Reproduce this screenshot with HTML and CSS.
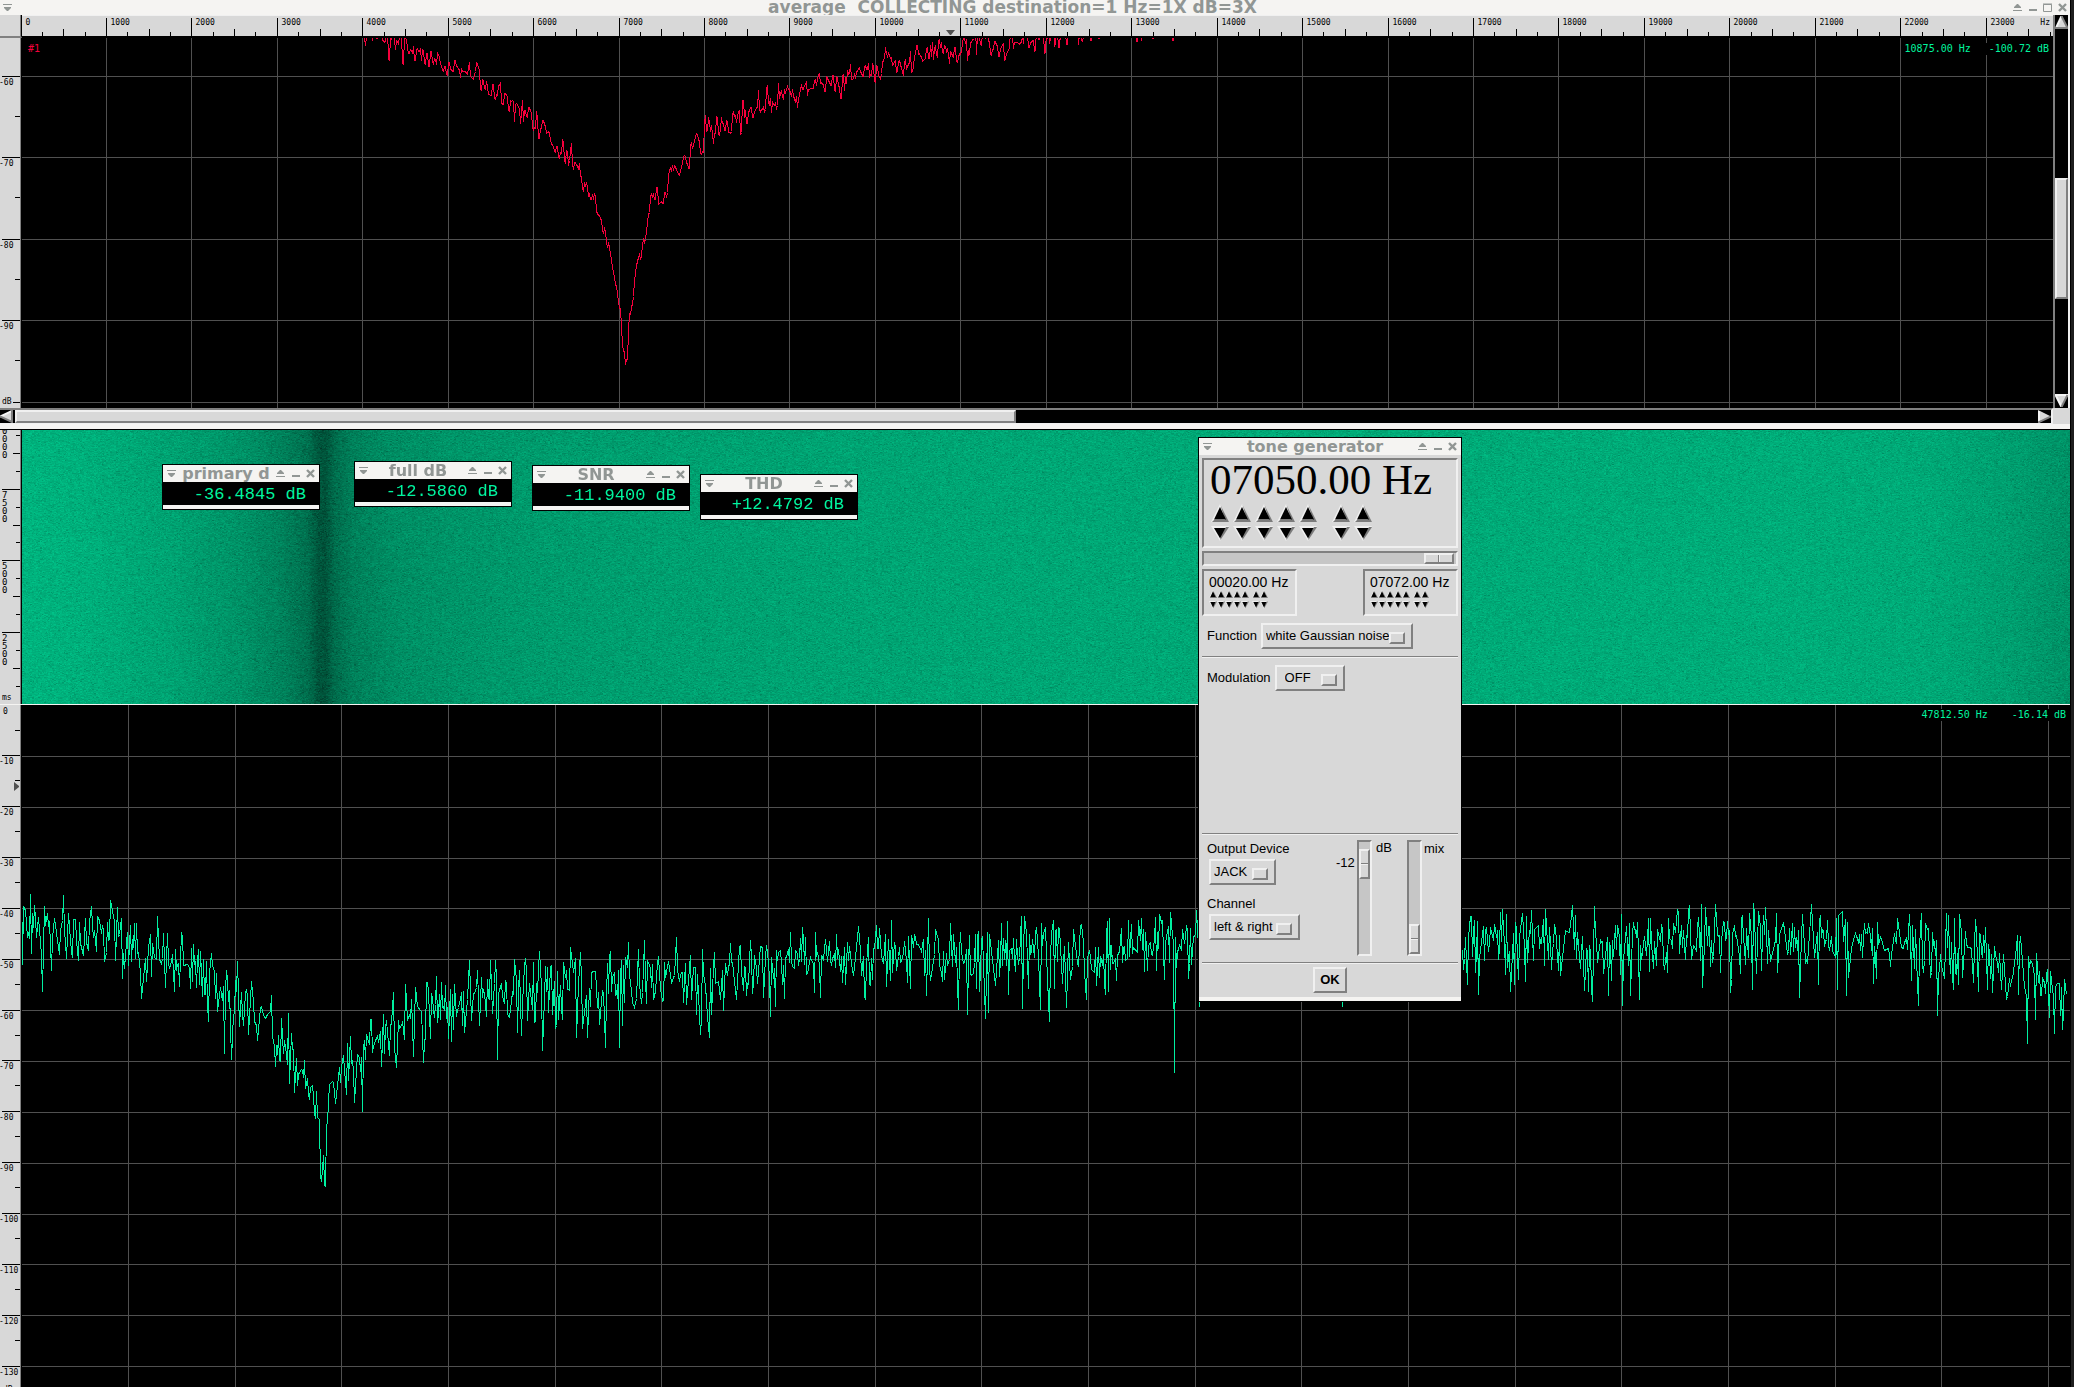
FILE: index.html
```html
<!DOCTYPE html>
<html lang="en">
<head>
<meta charset="utf-8">
<title>average COLLECTING</title>
<link rel="stylesheet" href="styles.css">
</head>
<body>
<svg class="defs" aria-hidden="true">
  <symbol id="i-menu" viewBox="0 0 9 7"><path d="M0 0h9v1H0zM1 3h7v1L5 7H4L1 4z" fill="#919694"/></symbol>
  <symbol id="i-shade" viewBox="0 0 9 7"><path d="M0 6h9v1H0zM1 4h7V3L5 0H4L1 3z" fill="#919694"/></symbol>
  <symbol id="i-min" viewBox="0 0 9 7"><path d="M1 5h8v2H1z" fill="#919694"/></symbol>
  <symbol id="i-max" viewBox="0 0 9 9"><path d="M.5 1.5h8v7h-8zM0 1h9" fill="none" stroke="#919694"/></symbol>
  <symbol id="i-close" viewBox="0 0 9 9"><path d="M1 1l7 7M8 1L1 8" fill="none" stroke="#919694" stroke-width="2.4"/></symbol>
  <symbol id="s-left" viewBox="0 0 13 13"><path d="M0 6.5L13 0v13z" fill="#d8d8d8"/><path d="M0 6.5L13 .5" stroke="#f4f4f4" stroke-width="2"/><path d="M0 6.5L12 12V0" fill="none" stroke="#808080" stroke-width="2"/></symbol>
  <symbol id="s-right" viewBox="0 0 13 13"><path d="M13 6.5L0 0v13z" fill="#d8d8d8"/><path d="M1 13V1" stroke="#f4f4f4" stroke-width="2"/><path d="M0 12.5L13 6.5" stroke="#808080" stroke-width="2"/></symbol>
  <symbol id="s-up" viewBox="0 0 13 13"><path d="M6.5 0L0 13h13z" fill="#d8d8d8"/><path d="M6.5 0L.5 13" stroke="#f4f4f4" stroke-width="2"/><path d="M6.5 0L12.5 12H0" fill="none" stroke="#808080" stroke-width="2"/></symbol>
  <symbol id="s-down" viewBox="0 0 13 13"><path d="M6.5 13L0 0h13z" fill="#d8d8d8"/><path d="M6.5 13L.5 1H13" fill="none" stroke="#f4f4f4" stroke-width="2"/><path d="M6.5 13L12.5 1" stroke="#808080" stroke-width="2"/></symbol>
  <symbol id="a-up" viewBox="0 0 18 18" preserveAspectRatio="none"><path d="M9 0L0 18h18z" fill="#f0f0f0"/><path d="M9.5 1L18 18H1l2-2h11z" fill="#7c7c7c"/><path d="M9 3L3 15.5h12z"/></symbol>
  <symbol id="a-down" viewBox="0 0 18 16" preserveAspectRatio="none"><path d="M9 16L0 0h18z" fill="#f0f0f0"/><path d="M9.5 15L18 1h-3L9 11z" fill="#7c7c7c"/><path d="M9 13L3 2h11.5z"/></symbol>
</svg>

<main class="desktop">
  <section class="spectrum">
    <header class="titlebar titlebar-main">
      <button class="tb" aria-label="Menu"><svg width="9" height="7"><use href="#i-menu"/></svg></button>
      <h1 class="title title-pre">average  COLLECTING destination=1 Hz=1X dB=3X</h1>
      <button class="tb" aria-label="Shade"><svg width="9" height="7"><use href="#i-shade"/></svg></button>
      <button class="tb" aria-label="Minimize"><svg width="9" height="7"><use href="#i-min"/></svg></button>
      <button class="tb" aria-label="Maximize"><svg width="9" height="9"><use href="#i-max"/></svg></button>
      <button class="tb" aria-label="Close"><svg width="9" height="9"><use href="#i-close"/></svg></button>
    </header>
    <div class="frame">
      <div class="corner"></div>
      <svg class="ruler-h" id="rulerHz"></svg>
      <div class="vscroll">
        <button class="sb" aria-label="Scroll up"><svg width="13" height="13"><use href="#s-up"/></svg></button>
        <div class="vtrack"><div class="gap-a"></div><div class="thumb vthumb"></div><div class="gap-b"></div></div>
        <button class="sb" aria-label="Scroll down"><svg width="13" height="13"><use href="#s-down"/></svg></button>
      </div>
      <svg class="ruler-v" id="rulerTop" height="370"></svg>
      <div class="plot">
        <svg class="chart" id="chartTop" viewBox="0 0 2031 370" preserveAspectRatio="none" height="370"></svg>
        <span class="trace-id">#1</span>
        <div class="readout"><span>10875.00 Hz</span><span>-100.72 dB</span></div>
      </div>
      <div class="hscroll">
        <button class="sb" aria-label="Scroll left"><svg width="13" height="13"><use href="#s-left"/></svg></button>
        <div class="htrack"><div class="thumb hthumb"></div></div>
        <button class="sb" aria-label="Scroll right"><svg width="13" height="13"><use href="#s-right"/></svg></button>
      </div>
      <div class="corner-end"></div>
    </div>
  </section>

  <section class="waterfall">
    <svg class="ruler-v" id="rulerMs" height="274"></svg>
    <canvas class="fall" id="fall" width="2048" height="274"></canvas>
  </section>

  <section class="live">
    <svg class="ruler-v" id="rulerDb" height="682"></svg>
    <div class="plot">
      <svg class="chart" id="chartLive" viewBox="0 0 2048 682" preserveAspectRatio="none" height="682"></svg>
      <div class="readout readout-live"><span>47812.50 Hz</span><span>-16.14 dB</span></div>
    </div>
  </section>

  <article class="win meter meter-primary">
    <header class="titlebar">
      <button class="tb" aria-label="Menu"><svg width="9" height="7"><use href="#i-menu"/></svg></button>
      <h2 class="title">primary d</h2>
      <button class="tb" aria-label="Shade"><svg width="9" height="7"><use href="#i-shade"/></svg></button>
      <button class="tb" aria-label="Minimize"><svg width="9" height="7"><use href="#i-min"/></svg></button>
      <button class="tb" aria-label="Close"><svg width="9" height="9"><use href="#i-close"/></svg></button>
    </header>
    <output class="value">-36.4845 dB</output>
  </article>
  <article class="win meter meter-full">
    <header class="titlebar">
      <button class="tb" aria-label="Menu"><svg width="9" height="7"><use href="#i-menu"/></svg></button>
      <h2 class="title">full dB</h2>
      <button class="tb" aria-label="Shade"><svg width="9" height="7"><use href="#i-shade"/></svg></button>
      <button class="tb" aria-label="Minimize"><svg width="9" height="7"><use href="#i-min"/></svg></button>
      <button class="tb" aria-label="Close"><svg width="9" height="9"><use href="#i-close"/></svg></button>
    </header>
    <output class="value">-12.5860 dB</output>
  </article>
  <article class="win meter meter-snr">
    <header class="titlebar">
      <button class="tb" aria-label="Menu"><svg width="9" height="7"><use href="#i-menu"/></svg></button>
      <h2 class="title">SNR</h2>
      <button class="tb" aria-label="Shade"><svg width="9" height="7"><use href="#i-shade"/></svg></button>
      <button class="tb" aria-label="Minimize"><svg width="9" height="7"><use href="#i-min"/></svg></button>
      <button class="tb" aria-label="Close"><svg width="9" height="9"><use href="#i-close"/></svg></button>
    </header>
    <output class="value">-11.9400 dB</output>
  </article>
  <article class="win meter meter-thd">
    <header class="titlebar">
      <button class="tb" aria-label="Menu"><svg width="9" height="7"><use href="#i-menu"/></svg></button>
      <h2 class="title">THD</h2>
      <button class="tb" aria-label="Shade"><svg width="9" height="7"><use href="#i-shade"/></svg></button>
      <button class="tb" aria-label="Minimize"><svg width="9" height="7"><use href="#i-min"/></svg></button>
      <button class="tb" aria-label="Close"><svg width="9" height="9"><use href="#i-close"/></svg></button>
    </header>
    <output class="value">+12.4792 dB</output>
  </article>

  <article class="win tone">
    <header class="titlebar">
      <button class="tb" aria-label="Menu"><svg width="9" height="7"><use href="#i-menu"/></svg></button>
      <h2 class="title">tone generator</h2>
      <button class="tb" aria-label="Shade"><svg width="9" height="7"><use href="#i-shade"/></svg></button>
      <button class="tb" aria-label="Minimize"><svg width="9" height="7"><use href="#i-min"/></svg></button>
      <button class="tb" aria-label="Close"><svg width="9" height="9"><use href="#i-close"/></svg></button>
    </header>
    <div class="tone-body">
      <div class="sunken freq">
        <output class="freq-value">07050.00 Hz</output>
        <div class="spins spins-big"></div>
      </div>
      <input class="range range-h" type="range" min="0" max="100" value="99" aria-label="Frequency">
      <div class="limits">
        <div class="sunken limit"><output>00020.00 Hz</output><div class="spins spins-small"></div></div>
        <div class="sunken limit"><output>07072.00 Hz</output><div class="spins spins-small"></div></div>
      </div>
      <div class="row row-function">
        <label for="fn">Function</label>
        <span class="option"><select id="fn" class="select select-fn"><option>white Gaussian noise</option></select></span>
      </div>
      <hr class="rule">
      <div class="row row-mod">
        <label for="mod">Modulation</label>
        <span class="option"><select id="mod" class="select select-mod"><option>OFF</option></select></span>
      </div>
      <hr class="rule">
      <div class="output">
        <div class="device">
          <label for="dev">Output Device</label>
          <span class="option"><select id="dev" class="select select-dev"><option>JACK</option></select></span>
          <label for="chan">Channel</label>
          <span class="option"><select id="chan" class="select select-chan"><option>left &amp; right</option></select></span>
        </div>
        <output class="gain">-12</output>
        <input class="range range-v" type="range" id="gain" min="0" max="100" value="92">
        <label class="lab-db" for="gain">dB</label>
        <input class="range range-v" type="range" id="mix" min="0" max="100" value="0">
        <label class="lab-mix" for="mix">mix</label>
      </div>
      <hr class="rule">
      <button class="ok">OK</button>
    </div>
  </article>
</main>
<script src="app.js"></script>
</body>
</html>
```
FILE: styles.css
```css
* { box-sizing: border-box; }
body {
  margin: 0;
  min-height: 100vh;
  display: flex;
  background: #1e1e1e;
  color: #000;
  font: 13px/16px "Liberation Sans", Arial, sans-serif;
}
h1, h2 { margin: 0; }
button, select, input { margin: 0; padding: 0; border: 0; background: none; font: inherit; color: inherit; }
svg { display: block; }
.defs { position: absolute; width: 0; height: 0; }

.desktop {
  position: relative;
  flex: 1;
  display: flex;
  flex-direction: column;
  height: 100vh;
  min-width: 0;
  margin-right: 3px;
  border-right: 1px solid #000;
  background: #000;
  overflow: hidden;
}

/* title bars */
.titlebar {
  display: flex;
  align-items: center;
  height: 17px;
  padding: 0 4px;
  gap: 6px;
  background: #f5f4f2;
  overflow: hidden;
}
.titlebar-main { height: 15px; padding: 0 3px; }
.tb { flex: none; width: 9px; height: 9px; display: grid; place-items: center; }
.title {
  flex: 1;
  min-width: 0;
  overflow: hidden;
  text-align: center;
  white-space: nowrap;
  font: bold 16px/18px "DejaVu Sans", sans-serif;
  color: #919694;
}
.title-pre { white-space: pre; font-size: 17px; line-height: 15px; }

/* averaged spectrum window */
.spectrum { flex: none; border-bottom: 5px solid #f5f4f2; }
.frame {
  display: grid;
  grid-template-columns: 22px 1fr 17px;
  grid-template-rows: 23px 370px 16px;
}
.corner { background: #d8d8d8; border-right: 1px solid #000; border-bottom: 2px solid #808080; box-shadow: inset -1px 0 #808080; }
.ruler-h { width: 100%; height: 23px; background: #d8d8d8; border-top: 1px solid #f0f0f0; border-bottom: 2px solid #000; overflow: hidden; }
.ruler-v {
  flex: none;
  width: 22px;
  background: #d8d8d8;
  border-right: 1px solid #000;
  box-shadow: inset -1px 0 #808080;
  overflow: hidden;
}
.ruler-h text, .ruler-v text { font: 8px "DejaVu Sans Mono", monospace; }
.ruler-v .digit { font-size: 9px; }
.plot { position: relative; min-width: 0; background: #000; overflow: hidden; }
.chart { width: 100%; }
.chart path { fill: none; vector-effect: non-scaling-stroke; shape-rendering: crispEdges; }
.grid { stroke: #505050; }
.trace-avg { stroke: #f5003c; }
.trace-live { stroke: #00f0a0; }
.trace-id, .readout {
  position: absolute;
  top: 5px;
  font: 10px/12px "DejaVu Sans Mono", monospace;
  color: #00f59f;
}
.trace-id { left: 6px; color: #f5003c; }
.readout { right: 4px; display: flex; gap: 18px; background: #000; }
.readout-live { top: 4px; gap: 24px; }

.vscroll {
  grid-row: 1 / 3;
  grid-column: 3;
  display: flex;
  flex-direction: column;
  padding: 1px 0;
  background: #000;
  border-left: 2px solid #808080;
  border-right: 2px solid #f0f0f0;
}
.vtrack { flex: 1; display: flex; flex-direction: column; }
.gap-a { flex: 150; }
.vthumb { flex: 118; }
.gap-b { flex: 96; }
.thumb { background: #d8d8d8; border: 2px solid; border-color: #f0f0f0 #808080 #808080 #f0f0f0; }
.hscroll {
  grid-column: 1 / 3;
  display: flex;
  background: #000;
  border-top: 2px solid #808080;
  border-right: 2px solid #f0f0f0;
  border-bottom: 1px solid #f0f0f0;
}
.htrack { flex: 1; display: flex; padding-left: 2px; }
.hthumb { flex: 0 0 49.5%; }
.sb { flex: none; width: 13px; height: 13px; }
.corner-end { background: #d8d8d8; }

/* waterfall and live spectrum */
.waterfall { flex: none; display: flex; border-top: 1px solid #000; border-bottom: 1px solid #f5f4f2; }
.fall { flex: 1; min-width: 0; height: 274px; background: #00a070; }
.live { flex: 1; min-height: 0; display: flex; overflow: hidden; }
.live .plot { flex: 1; }

/* floating windows */
.win { position: absolute; border: 1px solid #000; background: #f5f4f2; }
.meter { width: 158px; padding-bottom: 4px; }
.meter-primary { left: 162px; top: 464px; }
.meter-full { left: 354px; top: 461px; }
.meter-snr { left: 532px; top: 465px; }
.meter-thd { left: 700px; top: 474px; }
.value {
  display: block;
  height: 23px;
  padding-right: 13px;
  background: #000;
  color: #00f59f;
  text-align: right;
  white-space: nowrap;
  font: 17px/26px "Liberation Mono", monospace;
}

.tone { left: 1198px; top: 437px; width: 264px; padding-bottom: 4px; }
.tone-body { padding: 3px; background: #d8d8d8; display: flex; flex-direction: column; }
.sunken { border: 2px solid; border-color: #808080 #f0f0f0 #f0f0f0 #808080; }
.freq { height: 90px; padding: 0 6px; }
.freq-value { display: block; height: 44px; white-space: nowrap; font: 43px/40px "Liberation Serif", serif; }
.spins { display: grid; }
.spins svg { width: 100%; height: 100%; }
.spins-big { grid-template-columns: repeat(5, 18px) 7px repeat(2, 18px); grid-template-rows: 18px 15px; gap: 4px; padding-left: 1px; }
.spins-small { grid-template-columns: repeat(5, 8px) 3px repeat(2, 8px); grid-template-rows: 8px 8px; row-gap: 3px; }
.spin-space { grid-column: 6; }
.limits { display: flex; justify-content: space-between; margin-top: 3px; }
.limit { width: 95px; height: 47px; padding: 3px 5px; font-size: 14px; line-height: 16px; white-space: nowrap; }
.limit output { display: block; }

.range { appearance: none; background: #c6c6c6; border: 2px solid; border-color: #808080 #f0f0f0 #f0f0f0 #808080; }
.range-h { width: 100%; height: 15px; margin-top: 3px; }
.range-v { width: 15px; height: 116px; writing-mode: vertical-lr; direction: rtl; }
.range::-webkit-slider-thumb {
  appearance: none;
  border: 2px solid;
  border-color: #f0f0f0 #808080 #808080 #f0f0f0;
}
.range-h::-webkit-slider-thumb { width: 30px; height: 11px; background: linear-gradient(90deg, #d8d8d8 12px, #808080 12px 13px, #f0f0f0 13px 14px, #d8d8d8 14px); }
.range-v::-webkit-slider-thumb { width: 11px; height: 30px; background: linear-gradient(#d8d8d8 12px, #808080 12px 13px, #f0f0f0 13px 14px, #d8d8d8 14px); }

.row { display: flex; align-items: center; gap: 4px; padding-left: 5px; }
.row-function { height: 40px; }
.row-mod { height: 175px; align-items: flex-start; padding-top: 7px; }
.row-mod label { padding-top: 5px; }
.rule { width: 100%; margin: 0; border: 0; height: 2px; background: #f0f0f0; border-top: 1px solid #808080; }
.option { position: relative; display: inline-flex; }
.option::after {
  content: "";
  position: absolute;
  right: 8px;
  top: 9px;
  width: 12px;
  height: 8px;
  border: 2px solid;
  border-color: #f0f0f0 #808080 #808080 #f0f0f0;
  pointer-events: none;
}
.select {
  appearance: none;
  height: 26px;
  padding: 0 3px;
  background: #d8d8d8;
  border: 2px solid;
  border-color: #f0f0f0 #808080 #808080 #f0f0f0;
}
.select-fn { width: 152px; }
.select-mod { width: 70px; padding-left: 8px; }
.select-dev { width: 67px; }
.select-chan { width: 91px; }
.output { display: flex; align-items: flex-start; height: 127px; padding-top: 5px; }
.device { width: 125px; display: flex; flex-direction: column; align-items: flex-start; padding-left: 5px; line-height: 18px; }
.device .option { margin: 1px 0 10px 2px; }
.gain { width: 30px; padding: 15px 0 0 9px; }
.lab-db { width: 32px; padding-left: 4px; margin-right: 3px; }
.output .lab-mix { padding: 1px 0 0 2px; }
.ok {
  align-self: center;
  width: 34px;
  height: 26px;
  margin: 3px 0 1px;
  font-weight: bold;
  border: 2px solid;
  border-color: #f0f0f0 #808080 #808080 #f0f0f0;
}
```
FILE: app.js
```js
const NS = 'http://www.w3.org/2000/svg';
function el(parent, name, attrs, text) {
  const n = document.createElementNS(NS, name);
  for (const k in attrs) n.setAttribute(k, attrs[k]);
  if (text) n.textContent = text;
  parent.appendChild(n);
  return n;
}
const byId = id => document.getElementById(id);

// repeatable pseudo-random source
let seed = 20117;
function rnd() {
  seed = (seed * 1664525 + 1013904223) >>> 0;
  return (seed + 1) / 4294967297;
}
function curve(knots, x) {
  for (let i = 1; i < knots.length; i++) {
    if (x <= knots[i][0]) {
      const [x0, y0] = knots[i - 1], [x1, y1] = knots[i];
      return y0 + (y1 - y0) * (x - x0) / (x1 - x0);
    }
  }
  return knots[knots.length - 1][1];
}

// horizontal frequency ruler, a tick every 250 Hz
const W = 2031, pct = v => (v / W * 100) + '%';
const rh = byId('rulerHz');
for (let i = 0; i <= 95; i++) {
  const x = Math.floor(21.36 * i) - 0.5;
  const top = i % 4 === 0 ? 2 : i % 2 === 0 ? 13 : 16;
  el(rh, 'line', { x1: pct(x), x2: pct(x), y1: top, y2: 20, stroke: '#000' });
  if (i % 4 === 0) el(rh, 'text', { x: pct(x), dx: 4, y: 9 }, String(i * 250));
}
el(rh, 'text', { x: '100%', dx: -3, y: 9, 'text-anchor': 'end' }, 'Hz');
const mark = el(rh, 'svg', { x: pct(924), y: 14, width: 9, height: 6 });
el(mark, 'path', { d: 'M0 0h9L5 5H4z', fill: '#505050' });

// vertical rulers
function tick(r, y, len) {
  el(r, 'line', { x1: 20 - len, x2: 20, y1: y, y2: y, stroke: '#000' });
}
const rt = byId('rulerTop');
for (let k = 0; k < 5; k++) {
  const y = Math.floor(38 + 81.6 * k) + 0.5;
  tick(rt, y, k === 4 ? 7 : 18);
  if (k < 4) {
    tick(rt, y + 40, 5);
    el(rt, 'text', { x: -1, y: y + 8 }, String(-60 - 10 * k));
  }
}
el(rt, 'text', { x: 2, y: 366 }, 'dB');

const rm = byId('rulerMs');
for (let k = 1; k < 16; k++) {
  const y = Math.floor(274 - 17.9 * k) + 0.5;
  tick(rm, y, k % 4 === 0 ? 18 : k % 2 === 0 ? 7 : 4);
}
[['0000', 4], ['7500', 68], ['5000', 139], ['2500', 211]].forEach(([s, y]) => {
  [...s].forEach((c, i) => el(rm, 'text', { class: 'digit', x: 2, y: y + 8 * i }, c));
});
el(rm, 'text', { x: 2, y: 270 }, 'ms');

const rd = byId('rulerDb');
for (let k = 0; k <= 13; k++) {
  const y = Math.floor(50.85 * k) + 0.5;
  if (k) tick(rd, y, 18);
  tick(rd, y + 25, 5);
  el(rd, 'text', { x: k ? -1 : 3, y: y + 8 }, k ? String(-10 * k) : '0');
}
el(rd, 'text', { x: 3, y: 687 }, 'dB');
el(rd, 'path', { d: 'M14 77v9l5-4v-1z', fill: '#505050' });

// averaged spectrum
let d = '';
for (let k = 1; k < 24; k++) d += `M${Math.floor(85.44 * k) - 0.5} 0V370`;
for (let k = 0; k < 5; k++) d += `M0 ${Math.floor(38 + 81.6 * k) + 0.5}H2031`;
const ct = byId('chartTop');
el(ct, 'path', { class: 'grid', d });
const avg = [[340,-20],[360,-4],[385,-1],[397,3],[409,10],[422,15],[434,22],[450,28],[466,29],[475,40],[487,52],[503,58],[515,69],[530,80],[536,88],[544,87],[552,105],[562,112],[571,123],[577,122],[583,138],[591,158],[601,182],[605,197],[609,209],[613,229],[617,257],[620,272],[622,302],[624,318],[627,318],[629,282],[633,255],[636,230],[640,215],[645,202],[648,175],[654,162],[666,154],[671,129],[679,135],[682,120],[689,124],[695,99],[703,110],[705,94],[713,85],[720,89],[730,90],[742,72],[752,72],[760,69],[767,55],[773,67],[780,48],[785,62],[790,50],[795,67],[801,52],[815,46],[822,40],[842,46],[854,35],[870,30],[879,40],[885,19],[889,30],[899,22],[903,37],[911,18],[932,12],[940,3],[948,15],[958,24],[964,2],[969,12],[975,-1],[985,6],[1000,10],[1010,1],[1025,0],[1040,-2],[1070,-4],[1100,-7],[1160,-12],[1200,-18],[1220,-40]];
d = '';
let held = 0;
for (let x = 358; x < 1215; x++) {
  if (x % 2 === 0 || rnd() < 0.25) {
    held = (rnd() + rnd() + rnd() - 1.5) * 14;
    if (rnd() < 0.09) held += rnd() * 12;
  }
  const n = x > 590 && x < 650 ? held * 0.5 : held;
  const y = Math.round(curve(avg, x) + n);
  d += (d ? 'L' : 'M') + (x - 22 + 0.5) + ' ' + (y + 0.5);
}
el(ct, 'path', { class: 'trace-avg', d });

// live spectrum
d = '';
for (let k = 1; k < 20; k++) d += `M${Math.floor(0.8 + 106.67 * k) - 0.5} 0V682`;
for (let k = 1; k < 14; k++) d += `M0 ${Math.floor(50.85 * k + 0.5) + 0.5}H2048`;
const cl = byId('chartLive');
el(cl, 'path', { class: 'grid', d });
const live = [[22,912],[40,924],[60,930],[100,934],[130,942],[170,957],[200,970],[230,990],[250,1010],[270,1028],[290,1050],[305,1080],[315,1114],[330,1097],[345,1066],[370,1043],[400,1025],[430,1007],[470,997],[560,985],[700,972],[850,960],[1000,951],[1200,947],[1500,942],[1800,940],[1900,945],[1980,953],[2010,967],[2040,984],[2070,998]];
const notch = [[318,1117],[320,1120],[321,1176],[322,1182],[324,1155],[325,1184],[326,1187],[327,1127],[328,1122]];
const dips = { 232: 1060, 363: 1112, 620: 1048, 1050: 1022, 1175: 1073, 1343: 1007, 1640: 1000, 2063: 1030 };
d = 'M0 215';
let skipTo = 0;
for (let x = 23; x < 2070; x += 1) {
  if (x >= 318 && x <= 328) {
    if (!skipTo) { notch.forEach(p => d += `L${p[0] - 22.5} ${p[1] - 705}`); skipTo = 1; }
    continue;
  }
  if (dips[x]) { d += `L${x - 22.5} ${dips[x] - 705}`; continue; }
  if (rnd() < 0.25) continue;
  const p = -(Math.log(rnd()) + Math.log(rnd())) / 2;
  let n = -4.343 * Math.log(p + 0.02) * 6.4;
  n = Math.max(-37, Math.min(66, n - 5));
  if (x > 300 && x < 345) n *= 0.6;
  d += `L${x - 22.5} ${Math.round(curve(live, x) + n) - 704.5}`;
}
el(cl, 'path', { class: 'trace-live', d });

// waterfall
const cv = byId('fall'), g = cv.getContext('2d');
const img = g.createImageData(2048, 274);
const level = [[0,180],[60,176],[150,163],[220,146],[260,130],[285,112],[296,86],[303,84],[312,108],[330,128],[370,142],[420,148],[520,156],[700,162],[1000,167],[1400,170],[1750,173],[1900,170],[1980,160],[2048,146]];
const base = new Float32Array(2048);
for (let x = 0; x < 2048; x++) base[x] = curve(level, x);
for (let y = 0; y < 274; y++) {
  let n = 0;
  for (let x = 0; x < 2048; x++) {
    if (x % 2 === 0 || rnd() < 0.4) n = (rnd() + rnd() - 1) * 19 - (rnd() < 0.08 ? 14 : 0);
    const v = base[x] + n, i = (y * 2048 + x) * 4;
    img.data[i + 1] = v;
    img.data[i + 2] = v * 0.7;
    img.data[i + 3] = 255;
  }
}
g.putImageData(img, 0, 0);

// digit spinner buttons
document.querySelectorAll('.spins').forEach(box => {
  ['up', 'down'].forEach(dir => {
    for (let i = 0; i < 7; i++) {
      if (i === 5) {
        const s = document.createElement('span');
        s.className = 'spin-space';
        box.appendChild(s);
      }
      const b = document.createElement('button');
      b.setAttribute('aria-label', 'digit ' + (i + 1) + ' ' + dir);
      b.innerHTML = `<svg><use href="#a-${dir}"/></svg>`;
      box.appendChild(b);
    }
  });
});
```
